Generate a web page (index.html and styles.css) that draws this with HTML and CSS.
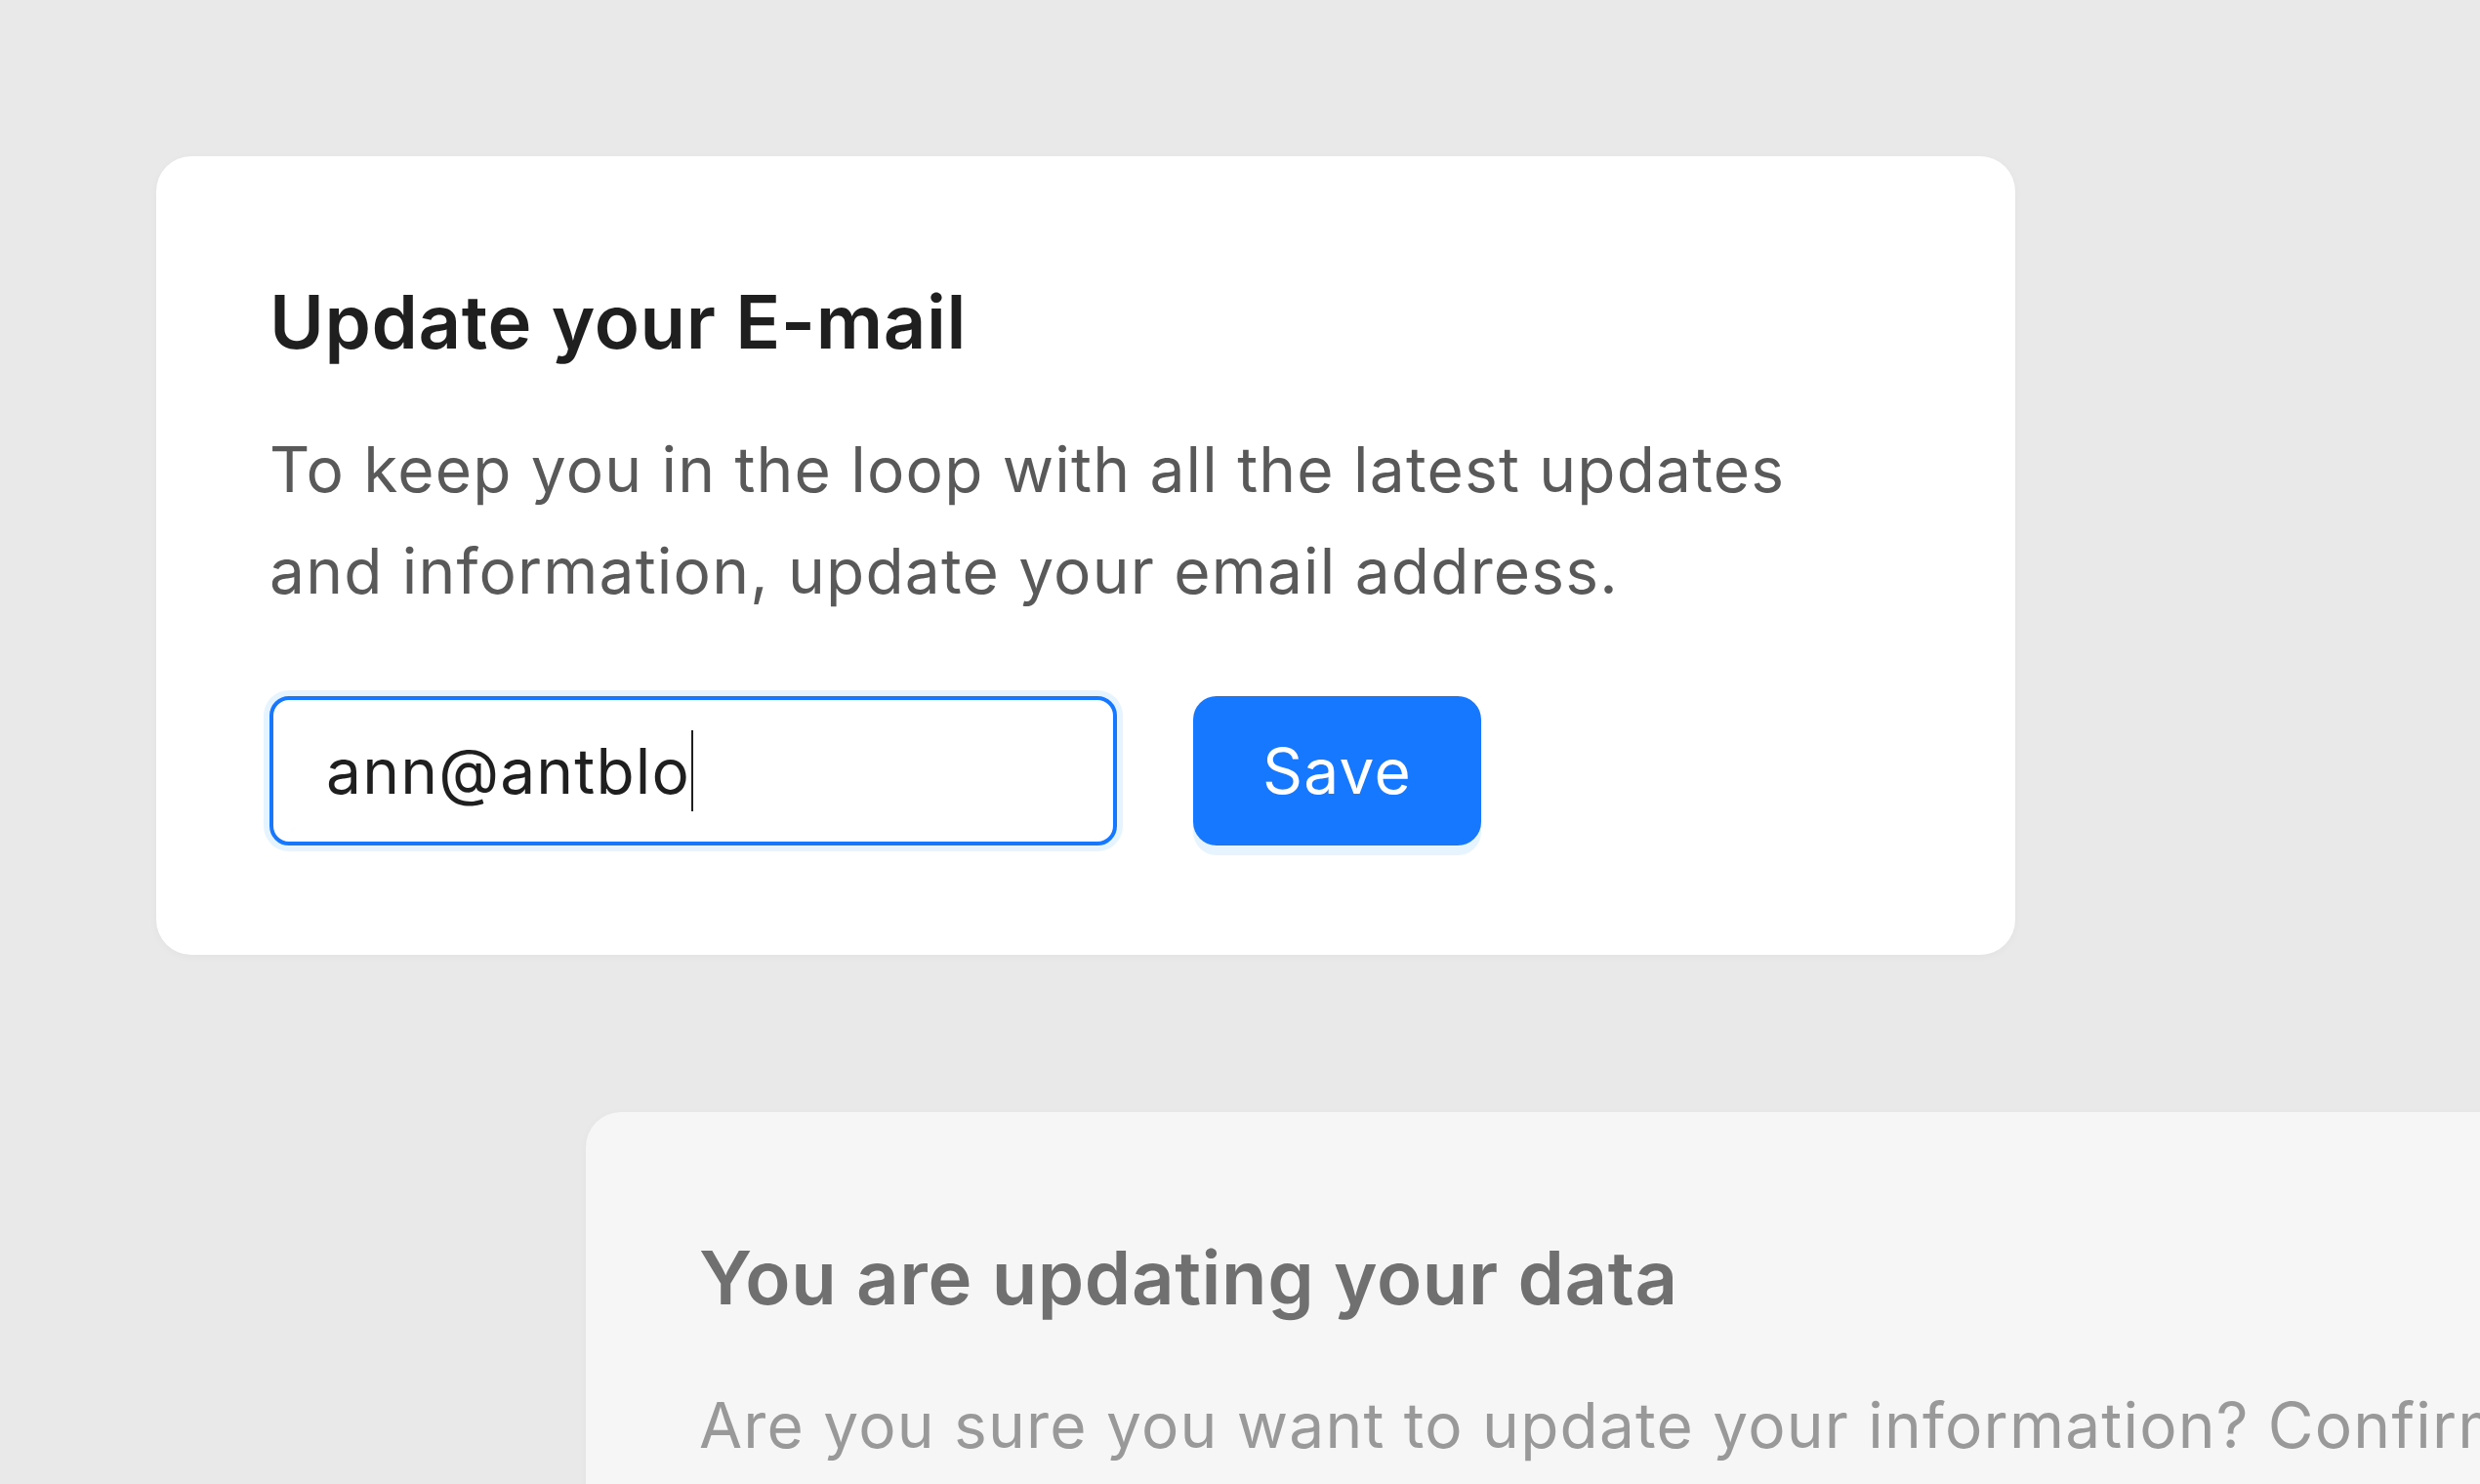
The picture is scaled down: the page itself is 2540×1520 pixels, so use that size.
FILE: index.html
```html
<!DOCTYPE html>
<html lang="en">
<head>
    <meta charset="UTF-8">
    <meta name="viewport" content="width=device-width, initial-scale=1.0">
    <title>Update E-mail</title>
    <link rel="stylesheet" href="styles.css">
</head>
<body>
    <div class="page">
        <div class="card">
            <h2 class="card-title">Update your E-mail</h2>
            <p class="card-text">To keep you in the loop with all the latest updates<br>and information, update your email address.</p>
            <div class="form-row">
                <div class="email-input">
                    <span class="value">ann@antblo</span><span class="caret"></span>
                </div>
                <button class="save-btn">Save</button>
            </div>
        </div>

        <div class="card card-muted">
            <h2 class="card-title">You are updating your data</h2>
            <p class="card-text">Are you sure you want to update your information? Confirm to save the new e-mail address.</p>
        </div>
    </div>
</body>
</html>
```

FILE: styles.css
```css
/* General */
body {
    margin: 0;
    padding: 0;
    background: #e9e9e9;
    font-family: Inter, "Noto Sans", sans-serif;
    overflow: hidden;
    height: 100vh;
}

.page {
    padding: 160px 0 0 160px;
}

/* Cards */
.card {
    width: 1904px;
    box-sizing: border-box;
    padding: 124px 112px 112px 116px;
    background: #ffffff;
    border-radius: 36px;
    box-shadow: 0 2px 10px rgba(0, 0, 0, 0.03);
}

.card-title {
    margin: 0;
    font-size: 76px;
    line-height: 1.2;
    font-weight: 600;
    letter-spacing: 0.6px;
    color: #1f1f1f;
}

.card-text {
    margin: 54px 0 0 0;
    font-size: 64px;
    line-height: 104px;
    letter-spacing: 1.2px;
    color: #595959;
}

/* Form */
.form-row {
    display: flex;
    align-items: center;
    gap: 78px;
    margin-top: 76px;
}

.email-input {
    width: 868px;
    height: 153px;
    box-sizing: border-box;
    border: 4px solid #1677ff;
    border-radius: 20px;
    box-shadow: 0 0 0 6px rgba(5, 145, 255, 0.1);
    padding-left: 54px;
    display: flex;
    align-items: center;
    font-size: 64px;
    letter-spacing: 1.2px;
    color: #1f1f1f;
}

.caret {
    display: inline-block;
    width: 2px;
    height: 83px;
    margin-left: 1px;
    background: #1f1f1f;
}

.save-btn {
    width: 295px;
    height: 153px;
    border: none;
    border-radius: 24px;
    background: #1677ff;
    color: #ffffff;
    font-family: inherit;
    font-size: 64px;
    letter-spacing: 1.2px;
    box-shadow: 0 10px 0 rgba(5, 145, 255, 0.1);
    cursor: pointer;
}

/* Second, faded card */
.card-muted {
    width: 2400px;
    margin: 161px 0 0 440px;
    background: #f6f6f6;
}

.card-muted .card-title {
    color: #707070;
}

.card-muted .card-text {
    color: #999999;
    white-space: nowrap;
}
```
